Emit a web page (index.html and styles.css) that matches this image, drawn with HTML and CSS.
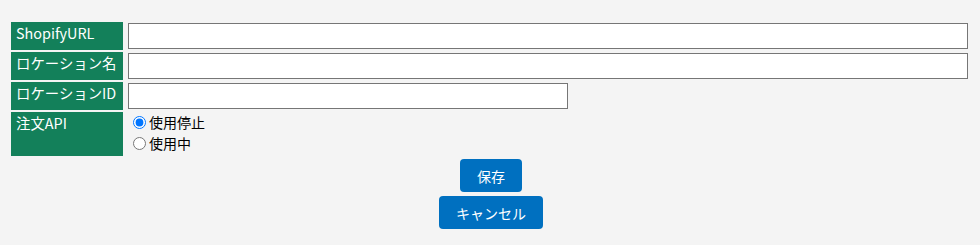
FILE: index.html
```html
<!DOCTYPE html>
<html lang="ja">
<head>
<meta charset="utf-8">
<link rel="stylesheet" href="styles.css">
</head>
<body>
<div class="page">
  <div class="form">
    <div class="label">ShopifyURL</div>
    <div class="field"><input type="text" class="input"></div>
    <div class="label">ロケーション名</div>
    <div class="field"><input type="text" class="input"></div>
    <div class="label">ロケーションID</div>
    <div class="field"><input type="text" class="input short"></div>
    <div class="label">注文API</div>
    <div class="field radios">
      <label class="opt"><input type="radio" name="api" checked>使用停止</label>
      <label class="opt"><input type="radio" name="api">使用中</label>
    </div>
  </div>
  <div class="actions">
    <button class="btn" type="button">保存</button>
  </div>
  <div class="actions">
    <button class="btn" type="button">キャンセル</button>
  </div>
</div>
</body>
</html>
```
FILE: styles.css
```css
html, body {
  margin: 0;
  padding: 0;
  background: #f4f4f4;
}
body {
  font-family: "Noto Sans CJK JP", "Noto Sans", sans-serif;
  font-size: 14px;
  color: #000;
}
.page {
  padding: 22px 9px 0 11px;
}
.form {
  display: grid;
  grid-template-columns: 112px 1fr;
  column-gap: 2px;
  row-gap: 2px;
}
.label {
  background: #13805a;
  color: #fff;
  padding: 1px 5px 0 5px;
  line-height: 20px;
  min-height: 27px;
  box-sizing: border-box;
  font-size: 14.4px;
}
.field {
  padding: 1px 3px;
  display: flex;
  flex-direction: column;
}
.input {
  box-sizing: border-box;
  height: 26px;
  margin: 0;
  border: 1px solid #767676;
  background: #fff;
  width: 100%;
  font: inherit;
}
.input.short {
  width: 440px;
}
.radios {
  padding: 0 3px 2px;
}
.opt {
  display: flex;
  align-items: center;
  height: 21px;
  font-size: 14px;
  line-height: 21px;
}
.opt input {
  width: 13px;
  height: 13px;
  margin: 0 3px 0 5px;
  accent-color: #0075ff;
}
.actions {
  display: flex;
  justify-content: center;
  margin-top: 3px;
}
.actions + .actions {
  margin-top: 4px;
}
.btn {
  height: 33px;
  padding: 0 17px;
  border: none;
  border-radius: 4px;
  background: #0070c0;
  color: #fff;
  font-family: "Noto Sans CJK JP", "Noto Sans", sans-serif;
  font-size: 14px;
  cursor: pointer;
}
```
